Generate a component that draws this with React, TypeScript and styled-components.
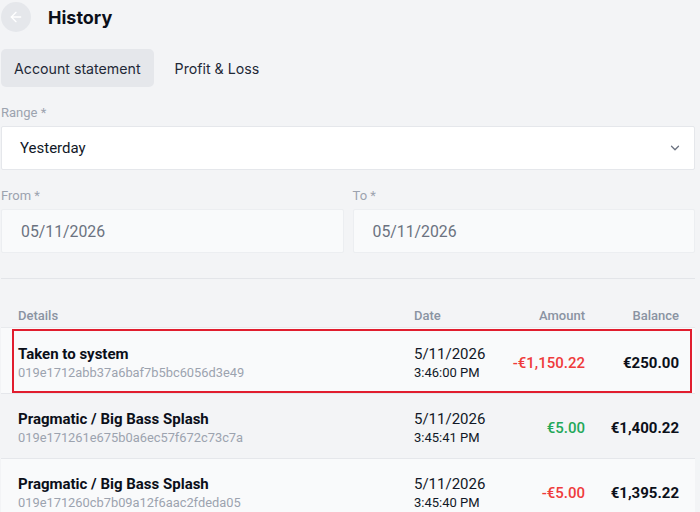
import React from "react";
import styled, { createGlobalStyle } from "styled-components";

const Global = createGlobalStyle`
  html, body { margin: 0; padding: 0; background: #f3f4f6; }
  body { font-family: Roboto, "Liberation Sans", sans-serif; color: #111827; }
  * { box-sizing: border-box; }
`;

const Page = styled.div`
  width: 700px;
  padding: 2px 5px 0 1px;
  display: flex;
  flex-direction: column;
`;

const Header = styled.header`
  display: flex;
  align-items: center;
  gap: 17px;
  height: 30px;
`;

const BackButton = styled.button`
  width: 30px;
  height: 30px;
  border-radius: 50%;
  border: none;
  background: #e5e7eb;
  display: flex;
  align-items: center;
  justify-content: center;
  padding: 0;
  color: #ffffff;
`;

const Title = styled.h1`
  margin: 0;
  font-family: Inter, "Liberation Sans", sans-serif;
  font-size: 18px;
  font-weight: 700;
  color: #0b0f19;
`;

const Tabs = styled.div`
  display: flex;
  gap: 8px;
  margin-top: 17px;
`;

const Tab = styled.button<{ $active?: boolean }>`
  height: 38px;
  padding: 0 13px;
  border: none;
  border-radius: 5px;
  background: ${(p) => (p.$active ? "#e5e7eb" : "transparent")};
  font-family: Inter, "Liberation Sans", sans-serif;
  font-size: 14.2px;
  color: #1f2937;
`;

const Field = styled.div<{ $top: number }>`
  display: flex;
  flex-direction: column;
  gap: 5px;
  margin-top: ${(p) => p.$top}px;
`;

const Label = styled.label`
  font-size: 13px;
  line-height: 16px;
  color: #9ca3af;
`;

const Select = styled.div`
  height: 44px;
  background: #ffffff;
  border: 1px solid #e5e7eb;
  border-radius: 2px;
  display: flex;
  align-items: center;
  justify-content: space-between;
  padding: 0 12px 0 18px;
  font-size: 15px;
  color: #111827;
`;

const DateRow = styled.div`
  display: grid;
  grid-template-columns: 1fr 1fr;
  gap: 9px;
  margin-top: 18px;
`;

const DateInput = styled.div`
  height: 44px;
  background: #f9fafb;
  border: 1px solid #eceef1;
  border-radius: 2px;
  display: flex;
  align-items: center;
  padding-left: 19px;
  font-size: 15.8px;
  color: #6b7280;
`;

const Divider = styled.hr`
  margin: 25px 0 0;
  border: none;
  border-top: 1px solid #e3e5e9;
`;

const Grid = styled.div`
  display: grid;
  grid-template-columns: 1fr 90px 81px 94px;
  align-items: center;
  padding: 0 16px 0 17px;
`;

const HeadRow = styled(Grid)`
  padding-top: 29px;
  padding-bottom: 3px;
  border-bottom: 1px solid #e8eaed;
`;

const HeadCell = styled.div<{ $right?: boolean }>`
  font-size: 13px;
  line-height: 16px;
  font-weight: 500;
  color: #8a93a2;
  text-align: ${(p) => (p.$right ? "right" : "left")};
`;

const Row = styled(Grid)<{ $alt?: boolean; $highlight?: boolean }>`
  position: relative;
  background: ${(p) => (p.$alt ? "#f3f4f6" : "#f9fafb")};
  border-bottom: 1px solid #e5e7eb;
  padding-top: ${(p) => (p.$highlight ? 16 : 15)}px;
  padding-bottom: 11px;
  ${(p) =>
    p.$highlight &&
    `&::after {
      content: "";
      position: absolute;
      left: 11px;
      right: 3px;
      top: 1px;
      bottom: 0px;
      border: 2px solid #e11d2e;
      pointer-events: none;
    }`}
`;

const Stack = styled.div`
  display: flex;
  flex-direction: column;
`;

const RowTitle = styled.div`
  font-size: 15px;
  line-height: 20px;
  font-weight: 700;
  color: #0b0f19;
`;

const Hash = styled.div`
  font-size: 12.85px;
  line-height: 18px;
  color: #9ca3af;
`;

const DateText = styled.div`
  font-size: 15px;
  line-height: 20px;
  color: #111827;
`;

const TimeText = styled.div`
  font-size: 13px;
  line-height: 18px;
  color: #111827;
`;

const Amount = styled.div<{ $tone: "neg" | "pos" }>`
  text-align: right;
  font-size: 15px;
  font-weight: 500;
  color: ${(p) => (p.$tone === "neg" ? "#ef3b3b" : "#1fa85a")};
`;

const Balance = styled.div`
  text-align: right;
  font-size: 15px;
  font-weight: 700;
  color: #0b0f19;
`;

const rows = [
  { title: "Taken to system", hash: "019e1712abb37a6baf7b5bc6056d3e49", date: "5/11/2026", time: "3:46:00 PM", amount: "-€1,150.22", tone: "neg" as const, balance: "€250.00", highlight: true },
  { title: "Pragmatic / Big Bass Splash", hash: "019e171261e675b0a6ec57f672c73c7a", date: "5/11/2026", time: "3:45:41 PM", amount: "€5.00", tone: "pos" as const, balance: "€1,400.22", alt: true },
  { title: "Pragmatic / Big Bass Splash", hash: "019e171260cb7b09a12f6aac2fdeda05", date: "5/11/2026", time: "3:45:40 PM", amount: "-€5.00", tone: "neg" as const, balance: "€1,395.22" },
];

export default function App() {
  return (
    <>
      <Global />
      <Page>
        <Header>
          <BackButton aria-label="Back">
            <svg width="16" height="16" viewBox="0 0 24 24" fill="none" stroke="currentColor" strokeWidth="2" strokeLinecap="round" strokeLinejoin="round">
              <path d="M19 12H5" />
              <path d="M12 19l-7-7 7-7" />
            </svg>
          </BackButton>
          <Title>History</Title>
        </Header>
        <Tabs>
          <Tab $active>Account statement</Tab>
          <Tab>Profit &amp; Loss</Tab>
        </Tabs>
        <Field $top={18}>
          <Label>Range *</Label>
          <Select>
            <span>Yesterday</span>
            <svg width="14" height="14" viewBox="0 0 24 24" fill="none" stroke="#6b7280" strokeWidth="2.2" strokeLinecap="round" strokeLinejoin="round">
              <path d="M6 9l6 6 6-6" />
            </svg>
          </Select>
        </Field>
        <DateRow>
          <Field $top={0}>
            <Label>From *</Label>
            <DateInput>05/11/2026</DateInput>
          </Field>
          <Field $top={0}>
            <Label>To *</Label>
            <DateInput>05/11/2026</DateInput>
          </Field>
        </DateRow>
        <Divider />
        <HeadRow>
          <HeadCell>Details</HeadCell>
          <HeadCell>Date</HeadCell>
          <HeadCell $right>Amount</HeadCell>
          <HeadCell $right>Balance</HeadCell>
        </HeadRow>
        {rows.map((r, i) => (
          <Row key={i} $alt={r.alt} $highlight={r.highlight}>
            <Stack>
              <RowTitle>{r.title}</RowTitle>
              <Hash>{r.hash}</Hash>
            </Stack>
            <Stack>
              <DateText>{r.date}</DateText>
              <TimeText>{r.time}</TimeText>
            </Stack>
            <Amount $tone={r.tone}>{r.amount}</Amount>
            <Balance>{r.balance}</Balance>
          </Row>
        ))}
      </Page>
    </>
  );
}
